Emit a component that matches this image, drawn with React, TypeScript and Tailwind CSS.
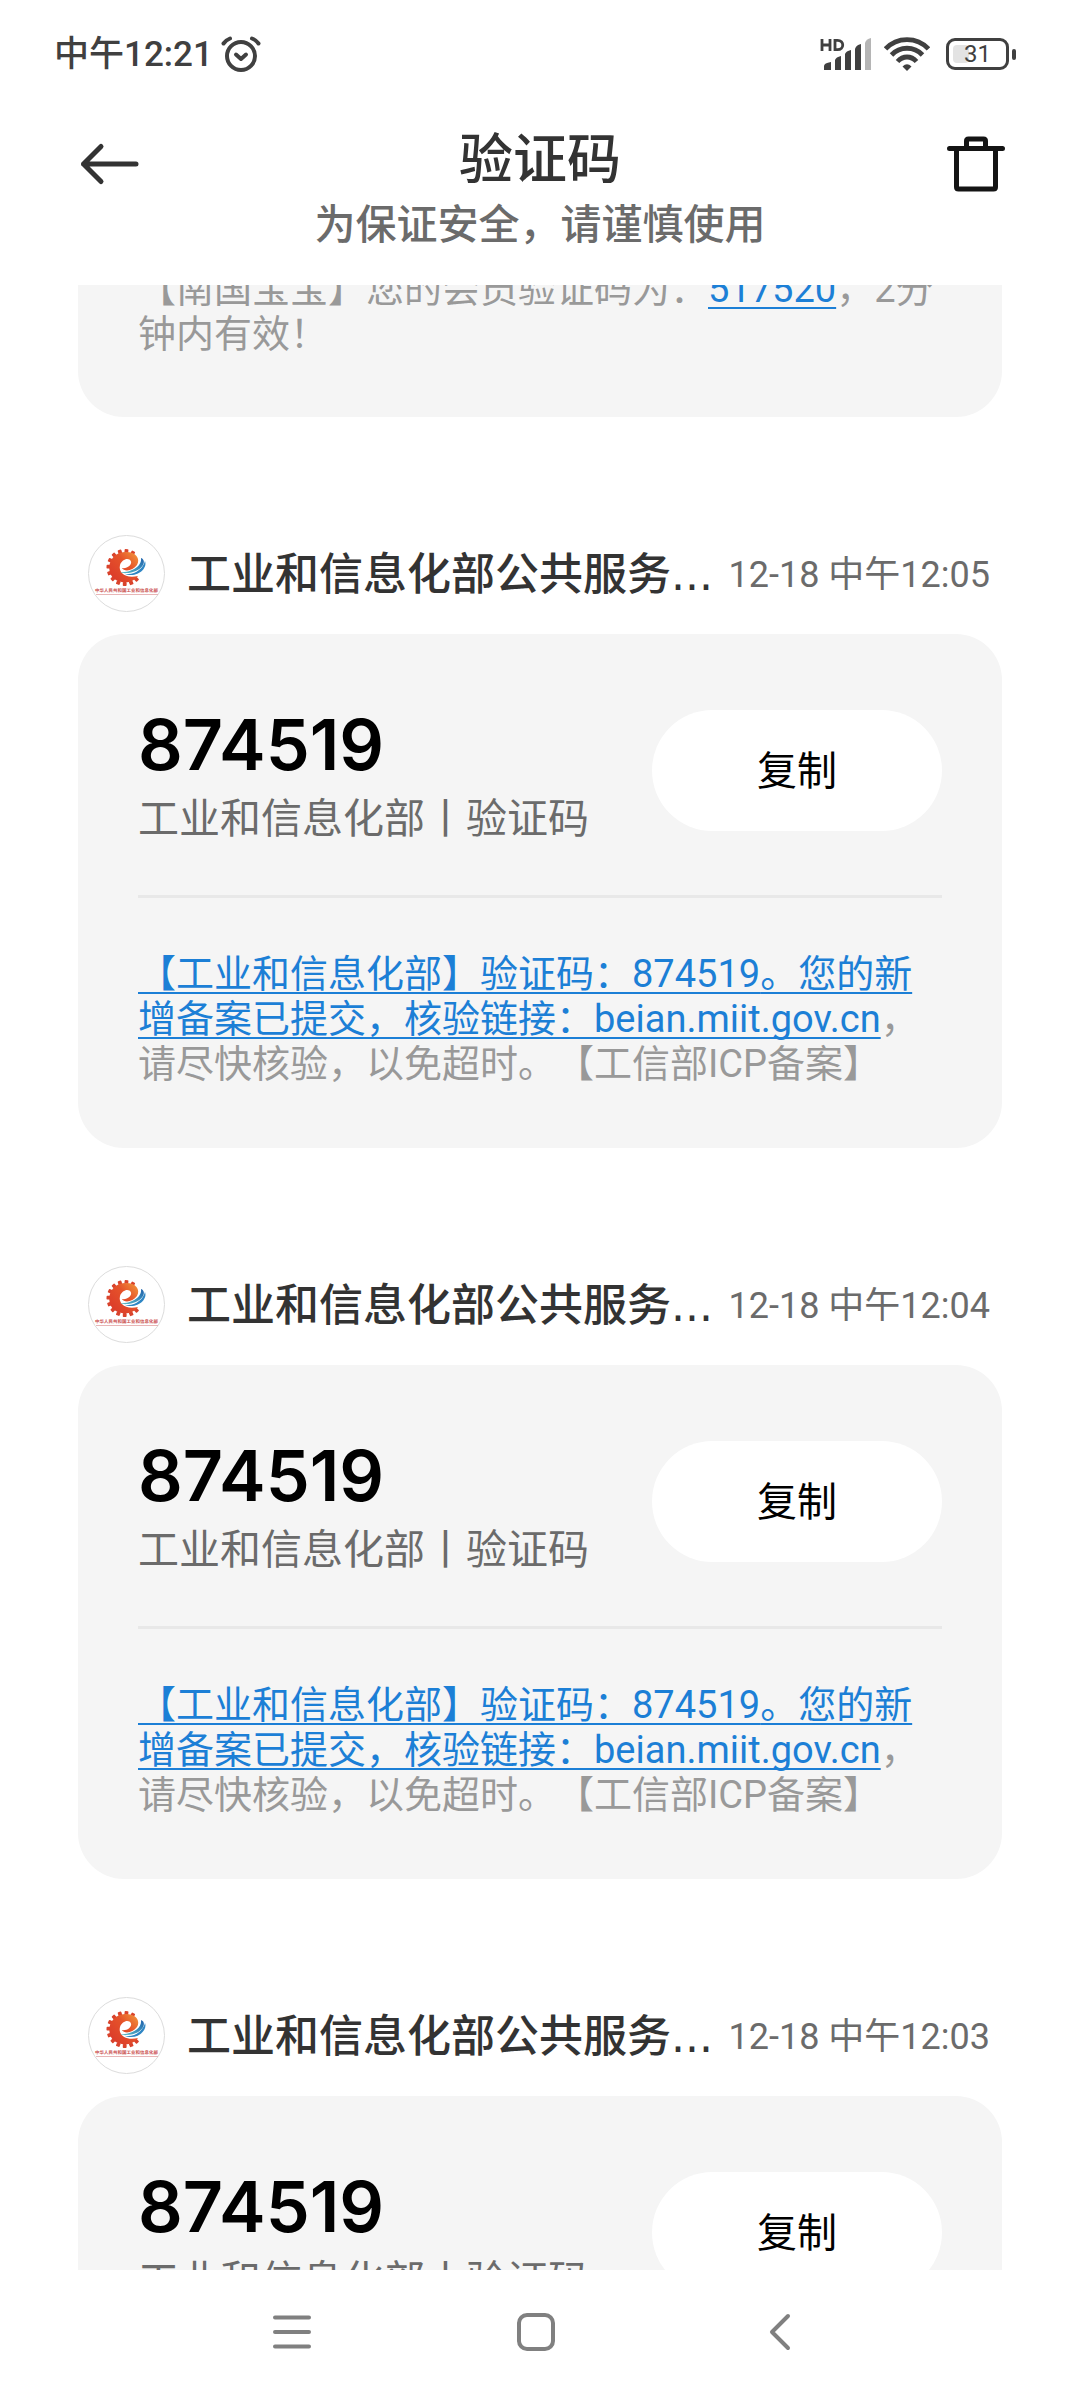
import type { ReactNode } from "react";

type Message = { id: string; time: string; code: string };

const messages: Message[] = [
  { id: "m1", time: "12-18 中午12:05", code: "874519" },
  { id: "m2", time: "12-18 中午12:04", code: "874519" },
  { id: "m3", time: "12-18 中午12:03", code: "874519" },
];

const toothAngles = [-62, -85, -108, -131, -154, -177, 160, 137, 114, 91, 68, 46];

function AlarmIcon() {
  return (
    <svg viewBox="0 0 40 36" className="h-9 w-10" fill="none" stroke="#404040" strokeWidth="4" strokeLinecap="round" aria-hidden="true">
      <circle cx="20" cy="20" r="14" />
      <path d="M15 18.500l5 4.500 5-4.500" strokeLinejoin="round" />
      <path d="M2.500 7.500Q5 4 9 2.500M37.500 7.500Q35 4 31 2.500" />
    </svg>
  );
}

function SignalIcon() {
  return (
    <svg viewBox="0 0 52 36" className="h-9 w-[52px]" aria-hidden="true">
      <path d="M2 3v12M10 3v12M2 9h8M15 4.300v9.400h2.500c7 0 7-9.400 0-9.400z" fill="none" stroke="#404040" strokeWidth="2.800" />
      <path d="M4 34v-4q0-3 7-4v8zM15 34V24q1-3 6-4v14zM25 34V18q1-3 6-4v20zM35 34V13q1-4 6-5v26z" fill="#404040" />
      <path d="M45 34V7q1-4 6-5v32z" fill="#b5b5b5" />
    </svg>
  );
}

function WifiIcon() {
  return (
    <svg viewBox="0 0 46 36" className="h-9 w-[46px]" fill="none" stroke="#404040" strokeWidth="4.800" aria-hidden="true">
      <path d="M1.500 13C13 0.500 33 0.500 44.500 13" />
      <path d="M7.500 19C16 10 30 10 38.500 19" />
      <path d="M13.500 25.500C19 19.500 27 19.500 32.500 25.500" />
      <path d="M18.500 30.500Q23 26 27.500 30.500L23 35z" fill="#404040" stroke="none" />
    </svg>
  );
}

function Battery() {
  return (
    <div className="flex items-center gap-[3px]" aria-label="电量 31%">
      <div className="relative flex h-8 w-[63px] items-center justify-center rounded-[9px] border-[3px] border-[#404040]">
        <span className="absolute top-1 bottom-1 left-1 w-4 rounded-sm bg-[#e3e3e3]" />
        <span className="relative text-[24px] leading-6 text-[#404040]">31</span>
      </div>
      <span className="h-[11px] w-1 rounded-sm bg-[#404040]" />
    </div>
  );
}

function AgencyLogo() {
  return (
    <svg viewBox="0 0 77 77" className="size-[77px] shrink-0" role="img" aria-label="工业和信息化部">
      <defs>
        <linearGradient id="flame" x1="0" y1="1" x2="1" y2="0">
          <stop offset="0" stopColor="#d9362a" />
          <stop offset="0.6" stopColor="#e5532a" />
          <stop offset="1" stopColor="#f39a3c" />
        </linearGradient>
        <linearGradient id="wave" x1="0" y1="1" x2="1" y2="0">
          <stop offset="0" stopColor="#5cc0c8" />
          <stop offset="1" stopColor="#1f62ad" />
        </linearGradient>
      </defs>
      <circle cx="38.500" cy="38.500" r="38" fill="#fff" stroke="#dcdcdc" />
      {toothAngles.map((angle) => (
        <rect key={angle} x="51.500" y="30.600" width="4" height="3.800" rx="0.8" fill="#d9432c" transform={`rotate(${angle} 37 32.500)`} />
      ))}
      <path
        d="M50 41C44 50 28 49 23 40C18 29 25 17.500 37 17C47 16.500 53 23 49 30C45 36 36 37 34 33C39 34 44 30 43 26.500C41 22 34 24 32 30C30 38 38 44 50 41Z"
        fill="url(#flame)"
      />
      <path d="M53 23C61 26 52 41 32 37.500C45 37 54 31 53 23Z" fill="url(#wave)" />
      <path d="M36 38.500C46 41 55 34 57 26C60 34 48 44 36 38.500Z" fill="#2f86c4" />
      <text x="38.500" y="57" textAnchor="middle" fontSize="4.500" fontWeight="700" fill="#c94b4b" textRendering="geometricPrecision">
        中华人民共和国工业和信息化部
      </text>
      <path d="M8 59.500h62" stroke="#e2a3a3" strokeWidth="0.800" />
    </svg>
  );
}

function Card({ children }: { children: ReactNode }) {
  return <div className="rounded-[46px] bg-[#f5f5f5] px-[60px]">{children}</div>;
}

function TextLink({ children }: { children: ReactNode }) {
  return (
    <a
      href="#"
      className="text-[#1c7fd6] underline decoration-2 underline-offset-[5px] [text-decoration-skip-ink:none]"
    >
      {children}
    </a>
  );
}

function MessageCard({ message }: { message: Message }) {
  return (
    <article className="mt-[118px]">
      <header className="mb-[22px] flex items-center gap-[22px] pr-3 pl-[10px]">
        <AgencyLogo />
        <h2 className="min-w-0 flex-1 pt-[2px] text-[44px] leading-[60px] font-medium whitespace-nowrap text-[#333]">
          工业和信息化部公共服务
          <span className="font-['DejaVu_Sans']">...</span>
        </h2>
        <time className="shrink-0 pt-[2px] text-[36px] leading-[48px] text-[#6b6b6b]">{message.time}</time>
      </header>
      <Card>
        <div className="flex h-[264px] items-center justify-between border-b-[3px] border-[#e8e8e8]">
          <div className="pt-[20px]">
            <p className="font-[Inter] text-[70px] leading-[88px] font-semibold text-black">{message.code}</p>
            <p className="text-[41px] leading-[60px] text-[#6b6b6b]">工业和信息化部丨验证码</p>
          </div>
          <button type="button" className="mt-3 h-[121px] w-[290px] rounded-full bg-white pt-[2px] text-[40px] text-black">
            复制
          </button>
        </div>
        <p className="pt-[54px] pb-[61px] text-[38px] leading-[45px] text-[#999]">
          <TextLink>【工业和信息化部】验证码：{message.code}。您的新增备案已提交，核验链接：beian.miit.gov.cn</TextLink>
          ，请尽快核验，以免超时。【工信部ICP备案】
        </p>
      </Card>
    </article>
  );
}

export default function App() {
  return (
    <div className="flex h-screen flex-col overflow-hidden bg-white font-[Roboto,'Noto_Sans_CJK_SC',sans-serif] [text-spacing-trim:space-all]" lang="zh-CN">
      <div className="flex h-[108px] shrink-0 items-center justify-between pr-[64px] pl-[54px]">
        <div className="flex items-center gap-2 text-[35px] font-medium text-[#404040]">
          <span className="pt-[2px]">中午12:21</span>
          <AlarmIcon />
        </div>
        <div className="flex items-center gap-3">
          <SignalIcon />
          <div className="flex items-center gap-4">
            <WifiIcon />
            <Battery />
          </div>
        </div>
      </div>

      <header className="flex h-[177px] shrink-0 justify-between px-[75px] pt-4">
        <button type="button" aria-label="返回" className="h-20">
          <svg viewBox="0 0 70 50" className="h-[50px] w-[70px]" fill="none" stroke="#333" strokeWidth="5" strokeLinecap="round" strokeLinejoin="round">
            <path d="M61 25H8.500M26 7.500L8.500 25L26 42.500" />
          </svg>
        </button>
        <div className="text-center">
          <h1 className="text-[54px] leading-[74px] font-medium text-[#333]">验证码</h1>
          <p className="text-[41px] leading-[54px] font-medium text-[#6b6b6b]">为保证安全，请谨慎使用</p>
        </div>
        <button type="button" aria-label="删除" className="flex h-20 w-[70px] items-center justify-end">
          <svg viewBox="0 0 58 56" className="h-14 w-[58px]" fill="none" stroke="#141414" strokeWidth="5" strokeLinecap="round" strokeLinejoin="round">
            <path d="M2.500 12.500h53M19.500 12V5q0-2 2-2h15q2 0 2 2v7M9.500 13v38q0 2 2 2h35q2 0 2-2V13" />
          </svg>
        </button>
      </header>

      <main className="min-h-0 flex-1 overflow-hidden px-[78px]">
        <div className="-mt-[84px]">
          <Card>
            <p className="pt-[66px] pb-[60px] text-[38px] leading-[45px] text-[#999]">
              【南国宝宝】您的会员验证码为：<TextLink>517520</TextLink>，2分钟内有效！
            </p>
          </Card>
          {messages.map((message) => (
            <MessageCard key={message.id} message={message} />
          ))}
        </div>
      </main>

      <nav className="flex h-[130px] shrink-0 items-center justify-center gap-[192px] bg-white pr-2 pb-[6px]">
        <button type="button" aria-label="最近任务">
          <svg viewBox="0 0 52 52" className="size-[52px]" fill="none" stroke="#808080" strokeWidth="4" strokeLinecap="round">
            <path d="M9 11.500h34M9 26h34M9 40.500h34" />
          </svg>
        </button>
        <button type="button" aria-label="主屏幕">
          <svg viewBox="0 0 52 52" className="size-[52px]" fill="none" stroke="#808080" strokeWidth="4">
            <rect x="9" y="9" width="34" height="34" rx="8" />
          </svg>
        </button>
        <button type="button" aria-label="返回上一页">
          <svg viewBox="0 0 52 52" className="size-[52px]" fill="none" stroke="#808080" strokeWidth="4" strokeLinecap="round" strokeLinejoin="round">
            <path d="M34 10L18 26L34 42" />
          </svg>
        </button>
      </nav>
    </div>
  );
}
